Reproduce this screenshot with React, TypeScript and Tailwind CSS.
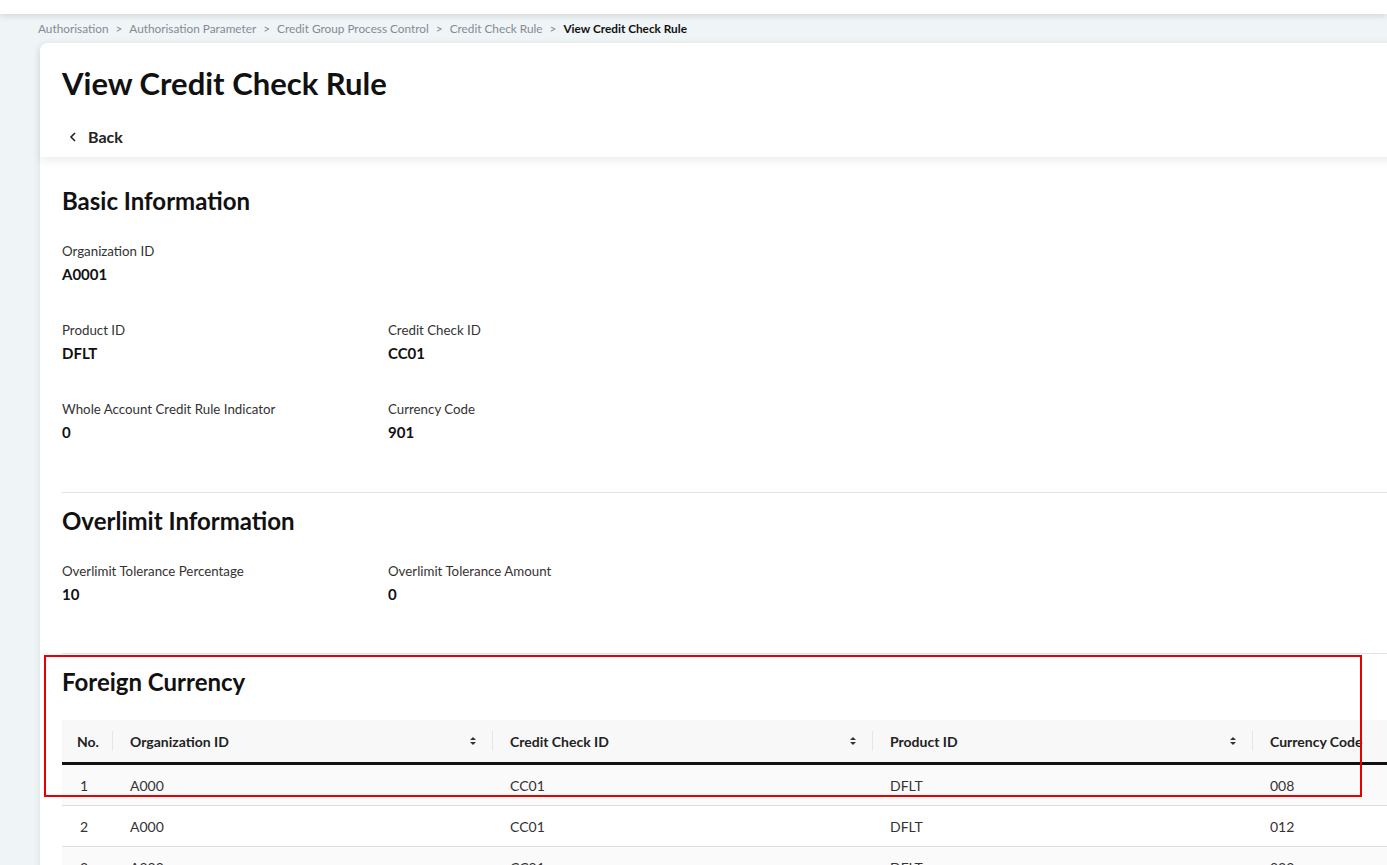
import React from "react";

const font = { fontFamily: "Lato, 'Noto Sans', sans-serif" };

function Field({ label, value }: { label: string; value: string }) {
  return (
    <div className="flex flex-col">
      <div className="h-[20px] leading-[20px] text-[13.3px] text-[#333]">{label}</div>
      <div className="mt-[1px] h-[24px] leading-[24px] text-[15px] font-bold text-[#111]">{value}</div>
    </div>
  );
}

function SortIcon() {
  return (
    <svg width="8" height="10" viewBox="0 0 8 10" className="shrink-0">
      <path d="M4 1 L7 4 H1 Z" fill="#333" />
      <path d="M4 9 L7 6 H1 Z" fill="#333" />
    </svg>
  );
}

export default function App() {
  const cols = ["Organization ID", "Credit Check ID", "Product ID", "Currency Code"];
  const rows = [
    ["1", "A000", "CC01", "DFLT", "008"],
    ["2", "A000", "CC01", "DFLT", "012"],
    ["3", "A000", "CC01", "DFLT", "032"],
  ];
  return (
    <div className="relative w-[1387px] h-[865px] overflow-hidden bg-[#eff4f7]" style={font}>
      <div className="h-[14px] bg-white shadow-[0_2px_6px_rgba(0,0,0,0.12)] relative z-10" />
      <div className="h-[29px] flex items-center pl-[38px] pt-[1px] text-[11.8px] text-[#858b93] gap-[7px]">
        <span>Authorisation</span>
        <span>&gt;</span>
        <span>Authorisation Parameter</span>
        <span>&gt;</span>
        <span>Credit Group Process Control</span>
        <span>&gt;</span>
        <span>Credit Check Rule</span>
        <span>&gt;</span>
        <span className="font-bold text-[#111]">View Credit Check Rule</span>
      </div>
      <div className="ml-[40px] w-[1400px] bg-white rounded-tl-[8px] shadow-[-2px_0_6px_rgba(0,0,0,0.06)] h-[830px]">
        <div className="relative z-10 pl-[22px] pt-[20px] pb-[8px] bg-white rounded-tl-[8px] shadow-[0_4px_8px_rgba(0,0,0,0.07)]">
          <h1 className="h-[40px] leading-[40px] text-[31px] font-bold text-[#111]">View Credit Check Rule</h1>
          <div className="mt-[22px] h-[24px] flex items-center gap-[10px] pl-[6px] text-[16px] font-bold text-[#222]">
            <svg width="10" height="12" viewBox="0 0 10 12">
              <path d="M7 2 L3 6 L7 10" fill="none" stroke="#222" strokeWidth="1.6" />
            </svg>
            <span>Back</span>
          </div>
        </div>
        <div className="pl-[22px]">
          <div className="pt-[28px]">
            <h2 className="h-[32px] leading-[32px] text-[24px] font-bold text-[#111]">Basic Information</h2>
            <div className="mt-[24px]">
              <Field label="Organization ID" value="A0001" />
            </div>
            <div className="mt-[34px] grid grid-cols-[326px_326px]">
              <Field label="Product ID" value="DFLT" />
              <Field label="Credit Check ID" value="CC01" />
            </div>
            <div className="mt-[34px] grid grid-cols-[326px_326px]">
              <Field label="Whole Account Credit Rule Indicator" value="0" />
              <Field label="Currency Code" value="901" />
            </div>
          </div>
          <div className="mt-[48px] h-px bg-[#e3e3e3]" />
          <div className="pt-[12px]">
            <h2 className="h-[32px] leading-[32px] text-[24px] font-bold text-[#111]">Overlimit Information</h2>
            <div className="mt-[24px] grid grid-cols-[326px_326px]">
              <Field label="Overlimit Tolerance Percentage" value="10" />
              <Field label="Overlimit Tolerance Amount" value="0" />
            </div>
          </div>
          <div className="mt-[47px] h-px bg-[#e3e3e3]" />
          <div className="pt-[12px]">
            <h2 className="h-[32px] leading-[32px] text-[24px] font-bold text-[#111]">Foreign Currency</h2>
            <div className="mt-[22px] w-[1600px]">
              <div className="flex h-[42px] bg-[#f8f8f8] border-b-[3px] border-[#111] box-content">
                <div className="w-[50px] flex items-center pl-[15px] text-[14px] font-bold text-[#222]">No.</div>
                {cols.map((c, i) => (
                  <div key={c} className="w-[380px] flex items-center">
                    <div className="w-px h-[20px] bg-[#e6e6e6]" />
                    <div className="flex-1 flex items-center justify-between pl-[17px] pr-[15px] text-[14px] font-bold text-[#222]">
                      <span>{c}</span>
                      {i < 3 && <SortIcon />}
                    </div>
                  </div>
                ))}
              </div>
              {rows.map((r, ri) => (
                <div
                  key={ri}
                  className={`flex h-[41px] border-b border-[#dedede] text-[14px] text-[#333] ${ri % 2 === 0 ? "bg-[#fafafa]" : "bg-white"}`}
                >
                  <div className="w-[50px] flex items-center pl-[18px]">{r[0]}</div>
                  {r.slice(1).map((c, ci) => (
                    <div key={ci} className="w-[380px] flex items-center pl-[18px]">{c}</div>
                  ))}
                </div>
              ))}
            </div>
          </div>
        </div>
      </div>
      <div className="absolute left-[44px] top-[655px] w-[1318px] h-[142px] border-2 border-[#e60000] z-20 pointer-events-none" />
    </div>
  );
}
